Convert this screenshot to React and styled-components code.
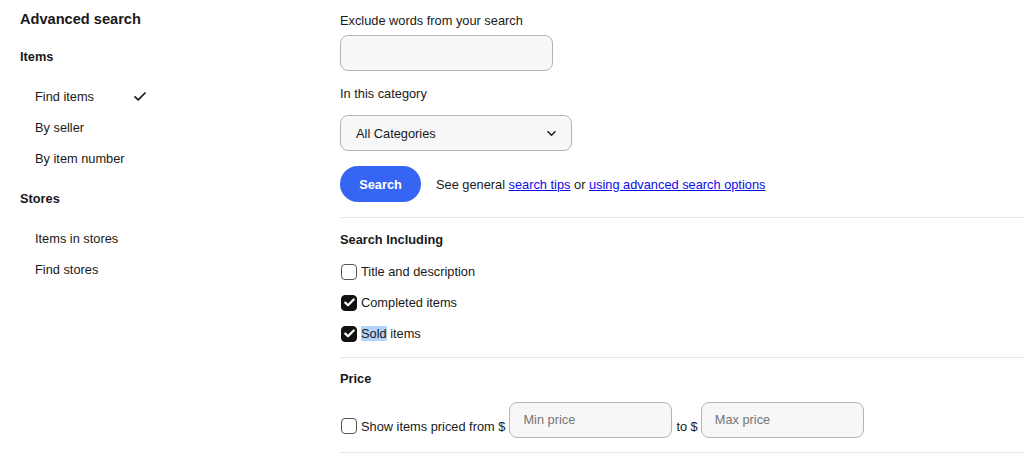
import React from "react";
import styled, { createGlobalStyle } from "styled-components";

const GlobalStyle = createGlobalStyle`
  html, body { margin: 0; padding: 0; background: #ffffff; }
  body {
    font-family: "Liberation Sans", Arial, Helvetica, sans-serif;
    color: #191919;
    font-size: 12.8px;
  }
  * { box-sizing: border-box; }
`;

const Page = styled.div`
  display: flex;
  width: 1024px;
  height: 455px;
  overflow: hidden;
`;

const Sidebar = styled.aside`
  width: 340px;
  flex: none;
  padding: 9px 0 0 20px;
  display: flex;
  flex-direction: column;
`;

const Title = styled.h1`
  margin: 0 0 18px;
  font-size: 14.6px;
  line-height: 20px;
  font-weight: 700;
`;

const NavHeading = styled.h2`
  margin: ${(p) => (p.$first ? "0" : "15px")} 0 14px;
  font-size: 12.8px;
  line-height: 20px;
  font-weight: 700;
`;

const NavList = styled.ul`
  list-style: none;
  margin: 0;
  padding: 0 0 0 15px;
`;

const NavItem = styled.li`
  height: 31px;
  display: flex;
  align-items: center;
  font-size: 12.8px;
  width: 111px;
  justify-content: space-between;
`;

const Main = styled.main`
  flex: 1;
  padding-top: 10px;
  display: flex;
  flex-direction: column;
`;

const FieldLabel = styled.label`
  display: block;
  font-size: 12.8px;
  line-height: 21px;
  margin-top: ${(p) => p.$mt || 0}px;
`;

const TextBox = styled.div`
  width: ${(p) => p.$w}px;
  height: 36px;
  margin-top: ${(p) => p.$mt || 0}px;
  background: #f7f7f7;
  border: 1px solid #b5b5b5;
  border-radius: 8px;
  display: flex;
  align-items: center;
  padding: 0 13px;
  color: #767676;
  font-size: 12.8px;
`;

const SelectBox = styled.div`
  width: 232px;
  height: 36px;
  margin-top: 11px;
  background: #f7f7f7;
  border: 1px solid #b5b5b5;
  border-radius: 8px;
  display: flex;
  align-items: center;
  justify-content: space-between;
  padding: 0 15px 0 15px;
  font-size: 12.8px;
  color: #191919;
`;

const ActionRow = styled.div`
  display: flex;
  align-items: center;
  margin-top: 15px;
  gap: 15px;
`;

const PrimaryButton = styled.button`
  width: 81px;
  height: 36px;
  border: none;
  border-radius: 18px;
  background: #3665f3;
  color: #ffffff;
  font-family: inherit;
  font-size: 12.8px;
  font-weight: 700;
  padding: 0;
`;

const HelpText = styled.span`
  font-size: 12.8px;
`;

const Link = styled.a`
  color: #0b0bea;
  text-decoration: underline;
`;

const Divider = styled.hr`
  border: none;
  border-top: 1px solid #e5e5e5;
  margin: ${(p) => p.$mt}px 0 0;
  width: 100%;
`;

const SectionHeading = styled.h3`
  margin: ${(p) => p.$mt}px 0 ${(p) => p.$mb || 0}px;
  font-size: 12.8px;
  line-height: 20px;
  font-weight: 700;
`;

const CheckRow = styled.div`
  height: 31px;
  display: flex;
  align-items: center;
  gap: 4px;
  padding-left: 1px;
  font-size: 12.8px;
`;

const Box = styled.span`
  width: 16px;
  height: 16px;
  flex: none;
  border-radius: 4px;
  border: 1px solid ${(p) => (p.$checked ? "#111111" : "#555555")};
  background: ${(p) => (p.$checked ? "#111111" : "#ffffff")};
  display: flex;
  align-items: center;
  justify-content: center;
`;

const Selected = styled.span`
  background: #b4d3fb;
`;

const PriceRow = styled.div`
  display: flex;
  align-items: flex-end;
  margin-top: 13px;
  padding-left: 1px;
  font-size: 12.8px;
`;

const PriceLabel = styled.span`
  display: flex;
  align-items: center;
  gap: 4px;
  margin-bottom: 4px;
  margin-right: ${(p) => p.$mr || 0}px;
  margin-left: ${(p) => p.$ml || 0}px;
`;

const PriceInput = styled(TextBox)`
  padding-bottom: 2px;
`;

function Checkbox({ checked }) {
  return (
    <Box $checked={checked}>
      {checked && (
        <svg width="11" height="9" viewBox="0 0 11 9" fill="none">
          <path d="M1.3 4.6 L4 7.2 L9.7 1.5" stroke="#fff" strokeWidth="2.2" strokeLinecap="round" strokeLinejoin="round" />
        </svg>
      )}
    </Box>
  );
}

export default function App() {
  return (
    <>
      <GlobalStyle />
      <Page>
        <Sidebar>
          <Title>Advanced search</Title>
          <NavHeading $first>Items</NavHeading>
          <NavList>
            <NavItem>
              Find items
              <svg width="12" height="9" viewBox="0 0 12 9" fill="none">
                <path d="M1 4.8 L4.2 7.8 L11 1" stroke="#191919" strokeWidth="1.7" strokeLinecap="round" strokeLinejoin="round" />
              </svg>
            </NavItem>
            <NavItem>By seller</NavItem>
            <NavItem>By item number</NavItem>
          </NavList>
          <NavHeading>Stores</NavHeading>
          <NavList>
            <NavItem>Items in stores</NavItem>
            <NavItem>Find stores</NavItem>
          </NavList>
        </Sidebar>
        <Main>
          <FieldLabel>Exclude words from your search</FieldLabel>
          <TextBox $w={213} $mt={4} />
          <FieldLabel $mt={12}>In this category</FieldLabel>
          <SelectBox>
            <span>All Categories</span>
            <svg width="9" height="5" viewBox="0 0 9 5" fill="none">
              <path d="M1 0.8 L4.5 4.2 L8 0.8" stroke="#191919" strokeWidth="1.5" strokeLinecap="round" strokeLinejoin="round" />
            </svg>
          </SelectBox>
          <ActionRow>
            <PrimaryButton>Search</PrimaryButton>
            <HelpText>
              See general <Link href="#">search tips</Link> or{" "}
              <Link href="#">using advanced search options</Link>
            </HelpText>
          </ActionRow>
          <Divider $mt={15} />
          <SectionHeading $mt={12} $mb={6}>Search Including</SectionHeading>
          <CheckRow>
            <Checkbox />
            Title and description
          </CheckRow>
          <CheckRow>
            <Checkbox checked />
            Completed items
          </CheckRow>
          <CheckRow>
            <Checkbox checked />
            <span>
              <Selected>Sold</Selected> items
            </span>
          </CheckRow>
          <Divider $mt={8} />
          <SectionHeading $mt={11}>Price</SectionHeading>
          <PriceRow>
            <PriceLabel $mr={4}>
              <Checkbox />
              Show items priced from $
            </PriceLabel>
            <PriceInput $w={163}>Min price</PriceInput>
            <PriceLabel $ml={4} $mr={3}>to $</PriceLabel>
            <PriceInput $w={163}>Max price</PriceInput>
          </PriceRow>
          <Divider $mt={14} />
        </Main>
      </Page>
    </>
  );
}
